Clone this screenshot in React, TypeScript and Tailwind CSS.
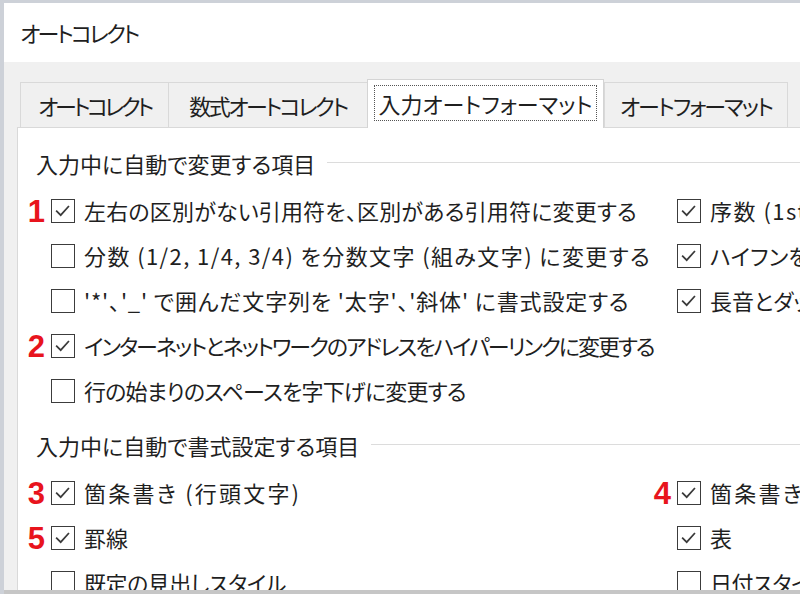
import React from 'react';

type Item = { label: string; checked: boolean; mark?: string; tr?: string };

const jp = "[font-family:'Noto_Sans_CJK_JP',sans-serif] [font-feature-settings:'palt']";

const CheckBox: React.FC<{ checked: boolean; mark?: string }> = ({ checked, mark }) => (
  <div className="relative shrink-0 w-[24px] h-[24px] border-[1.5px] border-[#3c3c3c] bg-white">
    {mark && (
      <span className="absolute right-full mr-[7px] top-1/2 -translate-y-1/2 text-[31px] leading-none font-bold text-[#e8141d] [font-family:'Liberation_Sans',Arial,sans-serif]">
        {mark}
      </span>
    )}
    {checked && (
      <svg viewBox="0 0 24 24" className="absolute inset-0 w-full h-full" fill="none">
        <path d="M4.5 11.5 L9.5 16.5 L18.5 6.5" stroke="#3a3a3a" strokeWidth="1.9" />
      </svg>
    )}
  </div>
);

const Row: React.FC<{ item?: Item }> = ({ item }) => {
  if (!item) return <div className="h-[45px]" />;
  return (
    <div className="h-[45px] flex items-center gap-[9px] whitespace-nowrap">
      <CheckBox checked={item.checked} mark={item.mark} />
      <span className={item.tr}>{item.label}</span>
    </div>
  );
};

const Section: React.FC<{ title: string; left: Item[]; right: (Item | undefined)[]; className?: string }> = ({ title, left, right, className }) => (
  <div className={className}>
    <div className="h-[40px] flex items-center">
      <span className="whitespace-nowrap">{title}</span>
      <div className="flex-1 h-px bg-[#dcdcdc] ml-[12px] -mt-[2px]" />
    </div>
    <div className="grid grid-cols-[626px_1fr] pl-[15px] mt-[5px]">
      {left.map((it, i) => (
        <React.Fragment key={i}>
          <Row item={it} />
          <Row item={right[i]} />
        </React.Fragment>
      ))}
    </div>
  </div>
);

const tabs = [
  { label: 'オートコレクト', w: 'w-[148px]', tr: 'tracking-[-3.3px]' },
  { label: '数式オートコレクト', w: 'w-[199px]', tr: 'tracking-[-2.5px]' },
  { label: '入力オートフォーマット', w: 'w-[237px]', tr: '', active: true },
  { label: 'オートフォーマット', w: 'w-[184px]', tr: 'tracking-[-2px]' },
];

export default function App() {
  const s1Left: Item[] = [
    { label: '左右の区別がない引用符を、区別がある引用符に変更する', checked: true, mark: '1', tr: 'tracking-[0.2px]' },
    { label: '分数 (1/2, 1/4, 3/4) を分数文字 (組み文字) に変更する', checked: false, tr: 'tracking-[1.4px]' },
    { label: "'*'、'_' で囲んだ文字列を '太字'、'斜体' に書式設定する", checked: false, tr: 'tracking-[0.85px]' },
    { label: 'インターネットとネットワークのアドレスをハイパーリンクに変更する', checked: true, mark: '2', tr: 'tracking-[-2px]' },
    { label: '行の始まりのスペースを字下げに変更する', checked: false, tr: 'tracking-[-0.8px]' },
  ];
  const s1Right: (Item | undefined)[] = [
    { label: '序数 (1st) を上付き文字に変更する', checked: true, tr: 'tracking-[1.5px]' },
    { label: 'ハイフンをダッシュに変更する', checked: true },
    { label: '長音とダッシュを正しく使い分ける', checked: true },
  ];
  const s2Left: Item[] = [
    { label: '箇条書き (行頭文字)', checked: true, mark: '3', tr: 'tracking-[2.2px]' },
    { label: '罫線', checked: true, mark: '5' },
    { label: '既定の見出しスタイル', checked: false, tr: 'tracking-[-0.5px]' },
  ];
  const s2Right: (Item | undefined)[] = [
    { label: '箇条書き (段落番号)', checked: true, mark: '4', tr: 'tracking-[2.2px]' },
    { label: '表', checked: true },
    { label: '日付スタイル', checked: false, tr: 'tracking-[-0.5px]' },
  ];

  return (
    <div className={`w-[800px] h-[594px] overflow-hidden bg-[#f0f0f0] border-t-[3px] border-l-[4px] border-[#cdd1d8] flex flex-col text-[22px] text-[#1f1f1f] ${jp}`}>
      <div className="h-[59px] shrink-0 bg-white flex items-center pl-[16px] tracking-[-2.6px]">オートコレクト</div>
      <div className="flex-1 flex flex-col pl-[13px] min-h-0">
        <div className="h-[65px] shrink-0 flex items-end pl-[3px]">
          {tabs.map((t, i) =>
            t.active ? (
              <div
                key={i}
                className={`${t.w} h-[49px] relative top-px z-10 bg-white border-t border-l border-r border-[#d4d4d4] flex items-center justify-center pb-[2px]`}
              >
                <div className="border border-dotted border-[#555] px-[3px] py-[2px] leading-[30px]">{t.label}</div>
              </div>
            ) : (
              <div
                key={i}
                className={`${t.w} ${t.tr} h-[45px] border-t border-l border-[#d9d9d9] ${i === tabs.length - 1 ? 'border-r' : ''} flex items-center justify-center`}
              >
                {t.label}
              </div>
            )
          )}
        </div>
        <div className="flex-1 bg-white border-t border-l border-[#d9d9d9] pl-[18px] pt-[15px] overflow-hidden">
          <Section title="入力中に自動で変更する項目" left={s1Left} right={s1Right} />
          <Section title="入力中に自動で書式設定する項目" left={s2Left} right={s2Right} className="mt-[12px]" />
        </div>
      </div>
      <div className="h-[4px] shrink-0 bg-[#c6c6c6]" />
    </div>
  );
}
